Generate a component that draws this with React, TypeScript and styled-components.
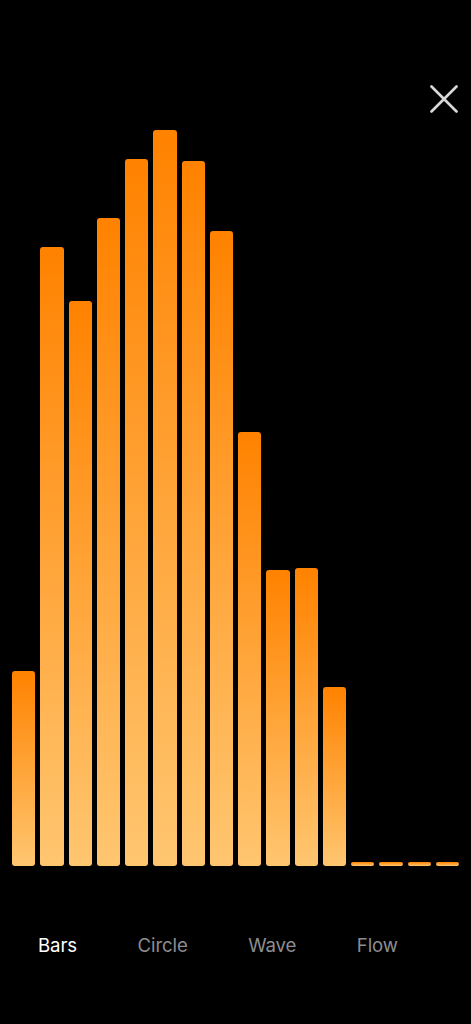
import React from 'react'
import styled, { createGlobalStyle } from 'styled-components'

const GlobalStyle = createGlobalStyle`
  html, body {
    margin: 0;
    padding: 0;
    background: #000;
  }
  body {
    font-family: Inter, "Liberation Sans", sans-serif;
  }
`

const Screen = styled.div`
  position: relative;
  width: 471px;
  height: 1024px;
  background: #000;
  display: flex;
  flex-direction: column;
  overflow: hidden;
`

const Chart = styled.div`
  height: 866px;
  box-sizing: border-box;
  padding: 0 12px;
  display: flex;
  align-items: flex-end;
  gap: 5px;
`

const Bar = styled.div`
  flex: 1;
  border-radius: 3px;
  background: linear-gradient(to bottom, #ff8200 0%, #ffc670 100%);
`

const Tabs = styled.nav`
  display: flex;
  gap: 60.5px;
  padding: 68px 0 0 38px;
`

const Tab = styled.button<{ $active?: boolean }>`
  background: none;
  border: 0;
  padding: 0;
  font-family: inherit;
  font-size: 18.6px;
  line-height: 22px;
  letter-spacing: -0.1px;
  color: ${(p) => (p.$active ? '#ffffff' : '#8d8d92')};
`

const Close = styled.button`
  position: absolute;
  top: 84px;
  right: 12px;
  width: 30px;
  height: 30px;
  padding: 0;
  border: 0;
  background: none;
  display: flex;
  align-items: center;
  justify-content: center;
`

// bar tops measured from the reference, bottom edge sits at 866
const tops = [671, 247, 301, 218, 159, 130, 161, 231, 432, 570, 568, 687, 862, 862, 862, 862]

const tabs = ['Bars', 'Circle', 'Wave', 'Flow']

export default function App() {
  return (
    <>
      <GlobalStyle />
      <Screen>
        <Chart>
          {tops.map((t, i) => (
            <Bar key={i} style={{ height: 866 - t }} />
          ))}
        </Chart>
        <Tabs>
          {tabs.map((t, i) => (
            <Tab key={t} $active={i === 0}>
              {t}
            </Tab>
          ))}
        </Tabs>
        <Close aria-label="Close">
          <svg width="28" height="28" viewBox="0 0 28 28">
            <path d="M1.5 1.5 L26.5 26.5 M26.5 1.5 L1.5 26.5" stroke="#d9d9d9" strokeWidth="2.6" strokeLinecap="round" />
          </svg>
        </Close>
      </Screen>
    </>
  )
}
